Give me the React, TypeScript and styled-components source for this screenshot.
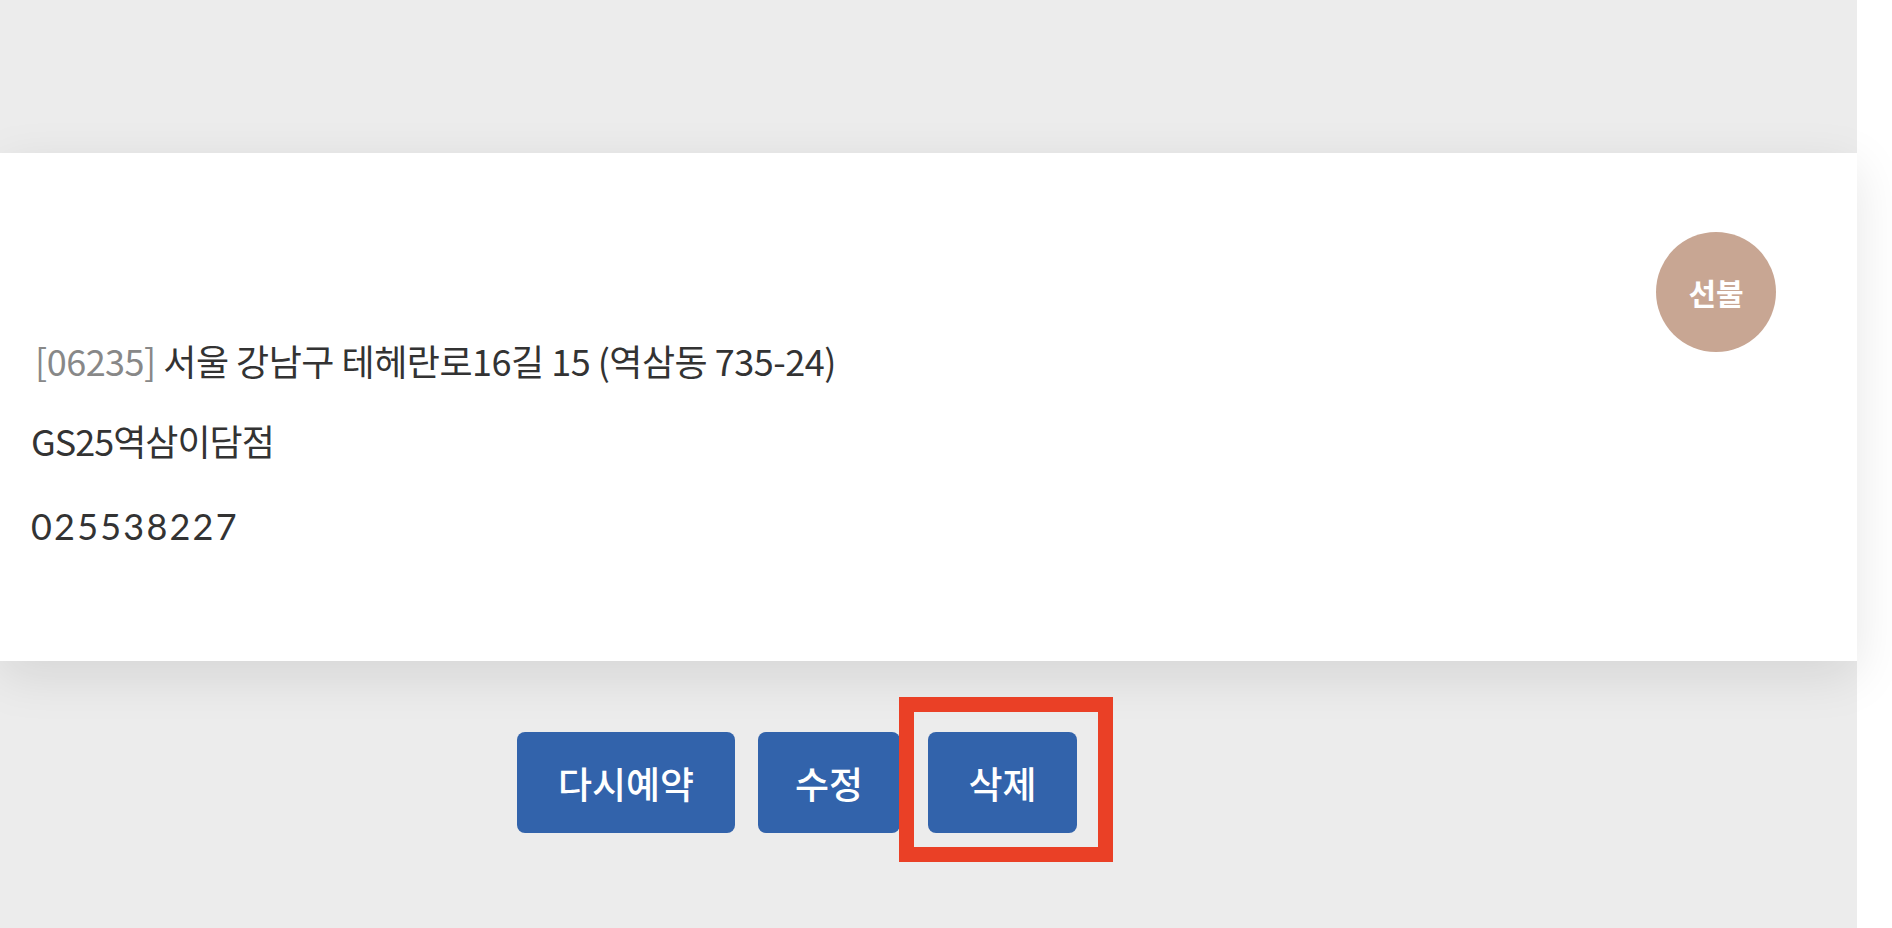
import styled, { createGlobalStyle } from 'styled-components'

const GlobalStyle = createGlobalStyle`
  html, body {
    margin: 0;
    padding: 0;
    background: #fff;
    font-family: "Noto Sans CJK KR", "Noto Sans", sans-serif;
  }
`

const Page = styled.div`
  width: 1857px;
  min-height: 928px;
  background: #ececec;
  padding-top: 153px;
  box-sizing: border-box;
`

const Card = styled.section`
  position: relative;
  background: #fff;
  padding: 182px 80px 110px 31px;
  box-shadow: 0 14px 48px rgba(0, 0, 0, 0.1);
  display: flex;
  flex-direction: column;
  gap: 30px;
`

const Badge = styled.span`
  position: absolute;
  top: 79px;
  right: 81px;
  width: 120px;
  height: 120px;
  border-radius: 50%;
  background: #c8a693;
  color: #fff;
  font-size: 30px;
  font-weight: 700;
  display: flex;
  align-items: center;
  justify-content: center;
`

const Line = styled.p<{ $indent?: number; $ls?: number }>`
  margin: 0;
  padding-left: ${p => p.$indent ?? 0}px;
  font-size: 36px;
  line-height: 50px;
  letter-spacing: ${p => p.$ls ?? -1}px;
  color: #333;
`

const Zip = styled.span`
  color: #888;
`

const Phone = styled(Line)`
  font-family: Lato, "Noto Sans", sans-serif;
  letter-spacing: 2.2px;
  margin-top: 6px;
`

const Actions = styled.div`
  display: flex;
  align-items: center;
  padding: 71px 0 0 517px;
`

const Button = styled.button<{ $w: number; $gap?: number }>`
  width: ${p => p.$w}px;
  height: 101px;
  margin-left: ${p => p.$gap ?? 0}px;
  border: none;
  border-radius: 8px;
  background: #3263ab;
  color: #fff;
  font-family: "Noto Sans CJK KR", sans-serif;
  font-size: 37px;
  font-weight: 500;
  cursor: pointer;
`

const Marked = styled.div`
  position: relative;
  margin-left: 28px;
  display: flex;
`

const Highlight = styled.span`
  position: absolute;
  left: -29px;
  top: -35px;
  width: 214px;
  height: 165px;
  box-sizing: border-box;
  border: 15px solid #ea4026;
  pointer-events: none;
`

export default function App() {
  return (
    <>
      <GlobalStyle />
      <Page>
        <Card>
          <Badge>선불</Badge>
          <Line $indent={4} $ls={-0.5}>
            <Zip>[06235]</Zip> 서울 강남구 테헤란로16길 15 (역삼동 735-24)
          </Line>
          <Line>GS25역삼이담점</Line>
          <Phone>025538227</Phone>
        </Card>
        <Actions>
          <Button $w={218}>다시예약</Button>
          <Button $w={142} $gap={23}>수정</Button>
          <Marked>
            <Button $w={149}>삭제</Button>
            <Highlight />
          </Marked>
        </Actions>
      </Page>
    </>
  )
}
